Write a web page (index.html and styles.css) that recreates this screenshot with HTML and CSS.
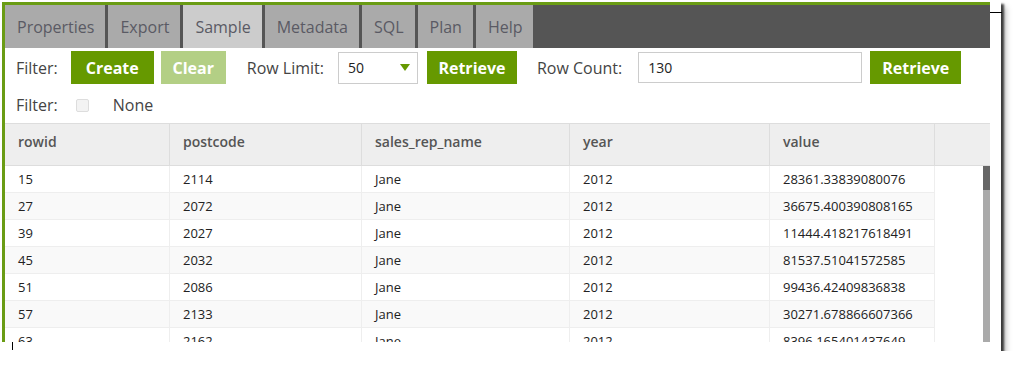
FILE: index.html
```html
<!DOCTYPE html>
<html lang="en">
<head>
  <meta charset="UTF-8" />
  <title>Sample</title>
  <link rel="stylesheet" href="styles.css">
</head>
<body>
  <div class="paper">
    <div class="app">
      <div class="tabs">
        <div class="tab">Properties</div>
        <div class="tab">Export</div>
        <div class="tab active">Sample</div>
        <div class="tab">Metadata</div>
        <div class="tab">SQL</div>
        <div class="tab">Plan</div>
        <div class="tab">Help</div>
      </div>

      <div class="toolbar">
        <span class="label">Filter:</span>
        <button class="btn create">Create</button>
        <button class="btn clear">Clear</button>
        <span class="label row-limit">Row Limit:</span>
        <div class="select"><span>50</span><i class="caret"></i></div>
        <button class="btn retrieve">Retrieve</button>
        <span class="label row-count">Row Count:</span>
        <div class="input">130</div>
        <button class="btn retrieve2">Retrieve</button>
      </div>

      <div class="toolbar2">
        <span class="label">Filter:</span>
        <span class="check"></span>
        <span class="label none">None</span>
      </div>

      <div class="grid">
        <div class="grid-head">
          <div class="hcell">rowid</div>
          <div class="hcell">postcode</div>
          <div class="hcell">sales_rep_name</div>
          <div class="hcell">year</div>
          <div class="hcell">value</div>
          <div class="hcell"></div>
        </div>
        <div class="grid-body">
          <div class="rows" id="rows"></div>
          <div class="scrollbar"><div class="thumb"></div></div>
        </div>
      </div>
    </div>
    <span class="mark-top"></span>
    <span class="mark-bottom"></span>
  </div>

  <script>
    const data = [
      ["15", "2114", "Jane", "2012", "28361.33839080076"],
      ["27", "2072", "Jane", "2012", "36675.400390808165"],
      ["39", "2027", "Jane", "2012", "11444.418217618491"],
      ["45", "2032", "Jane", "2012", "81537.51041572585"],
      ["51", "2086", "Jane", "2012", "99436.42409836838"],
      ["57", "2133", "Jane", "2012", "30271.678866607366"],
      ["63", "2162", "Jane", "2012", "8396.165401437649"]
    ];
    const rowsEl = document.getElementById("rows");
    data.forEach((r, i) => {
      const row = document.createElement("div");
      row.className = "row" + (i % 2 ? " odd" : "");
      r.forEach(v => {
        const c = document.createElement("div");
        c.className = "cell";
        c.textContent = v;
        row.appendChild(c);
      });
      rowsEl.appendChild(row);
    });
  </script>
</body>
</html>
```

FILE: styles.css
```css
body {
  margin: 0;
  background: #fff;
  font-family: 'Open Sans', 'DejaVu Sans', sans-serif;
  color: #333;
}
.paper {
  position: relative;
  width: 1001px;
  height: 351px;
  background: #fff;
  box-shadow: 3px 4px 2px rgba(0, 0, 0, 0.7), 5px 7px 6px rgba(0, 0, 0, 0.25);
}
.app {
  position: relative;
  top: 2px;
  left: 2px;
  width: 985px;
  height: 337px;
  border-top: 3px solid #6a9c14;
  border-left: 3px solid #6a9c14;
  overflow: hidden;
  background: #fff;
}
.tabs {
  display: flex;
  height: 43px;
  background: #555;
}
.tab {
  display: flex;
  align-items: center;
  padding: 0 11px 0 12px;
  margin-right: 3px;
  background: #aaa;
  color: #5a5a64;
  font-size: 16px;
}
.tab.active {
  background: #ccc;
}
.toolbar {
  display: flex;
  align-items: center;
  height: 33px;
  margin-top: 3px;
  padding-left: 11px;
}
.label {
  font-size: 16px;
  color: #444;
}
.btn {
  height: 33px;
  border: none;
  color: #fff;
  font-family: 'Open Sans', sans-serif;
  font-weight: 700;
  font-size: 16px;
  padding: 0;
  background: #669900;
}
.create { width: 83px; margin-left: 13px; }
.clear { width: 65px; margin-left: 7px; background: #b3cf85; }
.row-limit { margin-left: 21px; }
.select {
  display: flex;
  align-items: center;
  justify-content: space-between;
  box-sizing: border-box;
  width: 80px;
  height: 32px;
  margin-left: 14px;
  padding: 0 7px 0 9px;
  border: 1px solid #ccc;
  font-size: 14px;
  color: #222;
}
.caret {
  width: 0;
  height: 0;
  border-left: 5px solid transparent;
  border-right: 5px solid transparent;
  border-top: 7px solid #669900;
}
.retrieve { width: 90px; margin-left: 9px; }
.row-count { margin-left: 20px; }
.input {
  box-sizing: border-box;
  width: 224px;
  height: 31px;
  margin-left: 16px;
  padding: 5px 9px;
  border: 1px solid #ccc;
  font-size: 14px;
  color: #222;
}
.retrieve2 { width: 91px; margin-left: 8px; }
.toolbar2 {
  display: flex;
  align-items: center;
  height: 30px;
  margin-top: 6px;
  padding-left: 11px;
}
.check {
  box-sizing: border-box;
  width: 13px;
  height: 13px;
  margin-left: 18px;
  border: 1px solid #ddd;
  border-radius: 2px;
  background: #f3f3f3;
}
.none { margin-left: 24px; }
.grid {
  margin-top: 3px;
}
.grid-head {
  display: grid;
  grid-template-columns: 165px 192px 208px 200px 165px 55px;
  height: 41px;
  background: #eee;
  border-top: 1px solid #ddd;
  border-bottom: 1px solid #ddd;
}
.hcell {
  padding: 8px 0 0 13px;
  border-right: 1px solid #ddd;
  font-size: 14px;
  font-weight: 600;
  color: #555;
}
.hcell:last-child { border-right: none; }
.grid-body {
  display: flex;
}
.rows {
  width: 930px;
}
.row {
  display: grid;
  grid-template-columns: 165px 192px 208px 200px 165px;
  height: 26px;
  border-bottom: 1px solid #eee;
  background: #fff;
}
.row.odd { background: #f9f9f9; }
.cell {
  display: flex;
  align-items: center;
  padding-left: 13px;
  border-right: 1px solid #eee;
  font-size: 13px;
  color: #222;
}
.scrollbar {
  width: 7px;
  height: 200px;
  margin-left: auto;
  background: #aaa;
}
.thumb {
  height: 24px;
  background: #666;
}
.mark-top {
  position: absolute;
  left: 990px;
  top: 12px;
  width: 12px;
  height: 1px;
  background: #000;
}
.mark-bottom {
  position: absolute;
  left: 12px;
  top: 342px;
  width: 1px;
  height: 8px;
  background: #000;
}
```
